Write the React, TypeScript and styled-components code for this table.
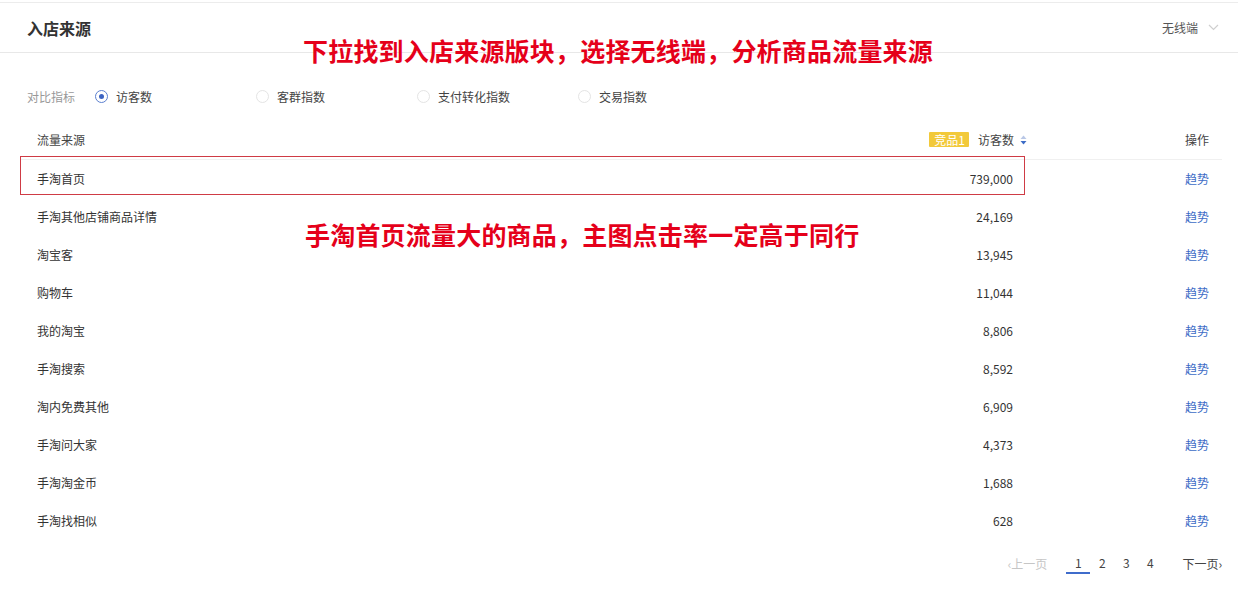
import styled, { createGlobalStyle } from 'styled-components';

const GlobalStyle = createGlobalStyle`
  body {
    margin: 0;
    background: #ffffff;
    font-family: 'Microsoft YaHei', 'Noto Sans CJK SC', 'Noto Sans', sans-serif;
    color: #333333;
  }
`;

const Panel = styled.div`
  position: relative;
  width: 1238px;
  height: 604px;
  padding-top: 2px;
  box-sizing: border-box;
  overflow: hidden;
`;

const Header = styled.div`
  display: flex;
  align-items: center;
  justify-content: space-between;
  height: 49px;
  padding: 0 19px 0 27px;
  border-top: 1px solid #ececec;
  border-bottom: 1px solid #e8e8e8;
`;

const Title = styled.h2`
  margin: 0;
  font-size: 16px;
  font-weight: bold;
  color: #333333;
`;

const Terminal = styled.div`
  display: flex;
  align-items: center;
  gap: 10px;
  font-size: 12px;
  color: #555555;
`;

const Note = styled.div<{ $x: number; $y: number }>`
  position: absolute;
  left: ${(p) => p.$x}px;
  top: ${(p) => p.$y}px;
  font-size: 25px;
  font-weight: bold;
  line-height: 30px;
  color: #e5001a;
  letter-spacing: 0.2px;
  white-space: nowrap;
`;

const FilterBar = styled.div`
  display: flex;
  align-items: center;
  height: 22px;
  margin-top: 32px;
  padding-left: 27px;
  font-size: 12px;
`;

const FilterLabel = styled.span`
  width: 68px;
  color: #999999;
`;

const RadioOption = styled.label`
  display: flex;
  align-items: center;
  gap: 8px;
  width: 161px;
  color: #444444;
`;

const RadioDot = styled.span<{ $checked?: boolean }>`
  width: 11px;
  height: 11px;
  border-radius: 50%;
  border: 1px solid ${(p) => (p.$checked ? '#5b7fcf' : '#e4e4e4')};
  display: flex;
  align-items: center;
  justify-content: center;

  &::after {
    content: '';
    width: 5px;
    height: 5px;
    border-radius: 50%;
    background: ${(p) => (p.$checked ? '#3d64c2' : 'transparent')};
  }
`;

const Table = styled.div`
  margin: 14px 16px 0 20px;
`;

const Row = styled.div<{ $head?: boolean; $mark?: boolean }>`
  position: relative;
  display: grid;
  grid-template-columns: 1fr 200px 182px;
  align-items: center;
  height: ${(p) => (p.$head ? '39px' : '38px')};
  padding: 0 13px ${(p) => (p.$head ? '2px' : '0')} 17px;
  font-size: 12px;
  color: ${(p) => (p.$head ? '#444444' : '#333333')};
  border-bottom: 1px solid ${(p) => (p.$head ? '#f0f0f0' : 'transparent')};
  box-sizing: border-box;

  &::after {
    content: '';
    display: ${(p) => (p.$mark ? 'block' : 'none')};
    position: absolute;
    left: 0;
    top: -4px;
    width: 1005px;
    height: 39px;
    border: 1.5px solid #cf3b45;
    box-sizing: border-box;
    pointer-events: none;
  }
`;

const Num = styled.span`
  text-align: right;
  padding-right: 14px;
  color: #333333;
`;

const VisitorHead = styled.span`
  display: flex;
  align-items: center;
  justify-content: flex-end;
`;

const Badge = styled.span`
  background: #f2c93a;
  color: #ffffff;
  font-size: 12px;
  line-height: 15px;
  padding: 0 4px 0 5px;
  margin-right: 9px;
  border-radius: 1px;
`;

const SortIcon = styled.svg`
  margin-left: 6px;
  margin-top: 2px;
`;

const OpCell = styled.span`
  text-align: right;
`;

const TrendLink = styled.a`
  text-align: right;
  color: #3d6cc6;
  text-decoration: none;
`;

const Pager = styled.div`
  display: flex;
  align-items: center;
  justify-content: flex-end;
  height: 24px;
  margin-top: 11px;
  padding-right: 16px;
  font-size: 12px;
  color: #444444;
`;

const PageNav = styled.span<{ $disabled?: boolean }>`
  color: ${(p) => (p.$disabled ? '#c6c6c6' : '#444444')};
  margin: 0 ${(p) => (p.$disabled ? '19px' : '0')} 0 ${(p) => (p.$disabled ? '0' : '20px')};
`;

const PageNum = styled.span<{ $active?: boolean }>`
  width: 24px;
  text-align: center;
  line-height: 18px;
  color: #444444;
  border-bottom: 2px solid ${(p) => (p.$active ? '#3f6ccb' : 'transparent')};
  margin-top: 2px;
`;

const rows: [string, string][] = [
  ['手淘首页', '739,000'],
  ['手淘其他店铺商品详情', '24,169'],
  ['淘宝客', '13,945'],
  ['购物车', '11,044'],
  ['我的淘宝', '8,806'],
  ['手淘搜索', '8,592'],
  ['淘内免费其他', '6,909'],
  ['手淘问大家', '4,373'],
  ['手淘淘金币', '1,688'],
  ['手淘找相似', '628'],
];

const options = ['访客数', '客群指数', '支付转化指数', '交易指数'];

export default function App() {
  return (
    <Panel>
      <GlobalStyle />
      <Header>
        <Title>入店来源</Title>
        <Terminal>
          无线端
          <svg width="11" height="7" viewBox="0 0 11 7">
            <polyline points="1,1 5.5,5.5 10,1" fill="none" stroke="#cfcfcf" strokeWidth="1.2" />
          </svg>
        </Terminal>
      </Header>

      <FilterBar>
        <FilterLabel>对比指标</FilterLabel>
        {options.map((o, i) => (
          <RadioOption key={o}>
            <RadioDot $checked={i === 0} />
            {o}
          </RadioOption>
        ))}
      </FilterBar>

      <Table>
        <Row $head>
          <span>流量来源</span>
          <VisitorHead>
            <Badge>竞品1</Badge>
            访客数
            <SortIcon width="7" height="11" viewBox="0 0 7 11">
              <polygon points="3.5,0.5 6.5,4 0.5,4" fill="#b9c7e6" />
              <polygon points="0.5,6 6.5,6 3.5,9.5" fill="#3d6cc6" />
            </SortIcon>
          </VisitorHead>
          <OpCell>操作</OpCell>
        </Row>
        {rows.map(([name, n], i) => (
          <Row key={name} $mark={i === 0}>
            <span>{name}</span>
            <Num>{n}</Num>
            <TrendLink href="#">趋势</TrendLink>
          </Row>
        ))}
      </Table>

      <Pager>
        <PageNav $disabled>‹上一页</PageNav>
        <PageNum $active>1</PageNum>
        <PageNum>2</PageNum>
        <PageNum>3</PageNum>
        <PageNum>4</PageNum>
        <PageNav>下一页›</PageNav>
      </Pager>

      <Note $x={303} $y={35}>下拉找到入店来源版块，选择无线端，分析商品流量来源</Note>
      <Note $x={305} $y={219}>手淘首页流量大的商品，主图点击率一定高于同行</Note>
    </Panel>
  );
}
